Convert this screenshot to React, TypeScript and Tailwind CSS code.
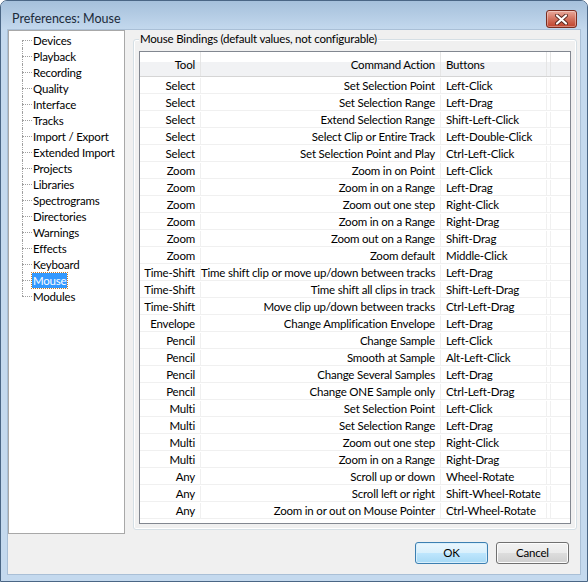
import React from 'react';

const rows: [string, string, string][] = [
  ['Select', 'Set Selection Point', 'Left-Click'],
  ['Select', 'Set Selection Range', 'Left-Drag'],
  ['Select', 'Extend Selection Range', 'Shift-Left-Click'],
  ['Select', 'Select Clip or Entire Track', 'Left-Double-Click'],
  ['Select', 'Set Selection Point and Play', 'Ctrl-Left-Click'],
  ['Zoom', 'Zoom in on Point', 'Left-Click'],
  ['Zoom', 'Zoom in on a Range', 'Left-Drag'],
  ['Zoom', 'Zoom out one step', 'Right-Click'],
  ['Zoom', 'Zoom in on a Range', 'Right-Drag'],
  ['Zoom', 'Zoom out on a Range', 'Shift-Drag'],
  ['Zoom', 'Zoom default', 'Middle-Click'],
  ['Time-Shift', 'Time shift clip or move up/down between tracks', 'Left-Drag'],
  ['Time-Shift', 'Time shift all clips in track', 'Shift-Left-Drag'],
  ['Time-Shift', 'Move clip up/down between tracks', 'Ctrl-Left-Drag'],
  ['Envelope', 'Change Amplification Envelope', 'Left-Drag'],
  ['Pencil', 'Change Sample', 'Left-Click'],
  ['Pencil', 'Smooth at Sample', 'Alt-Left-Click'],
  ['Pencil', 'Change Several Samples', 'Left-Drag'],
  ['Pencil', 'Change ONE Sample only', 'Ctrl-Left-Drag'],
  ['Multi', 'Set Selection Point', 'Left-Click'],
  ['Multi', 'Set Selection Range', 'Left-Drag'],
  ['Multi', 'Zoom out one step', 'Right-Click'],
  ['Multi', 'Zoom in on a Range', 'Right-Drag'],
  ['Any', 'Scroll up or down', 'Wheel-Rotate'],
  ['Any', 'Scroll left or right', 'Shift-Wheel-Rotate'],
  ['Any', 'Zoom in or out on Mouse Pointer', 'Ctrl-Wheel-Rotate'],
];

const pages = [
  'Devices',
  'Playback',
  'Recording',
  'Quality',
  'Interface',
  'Tracks',
  'Import / Export',
  'Extended Import',
  'Projects',
  'Libraries',
  'Spectrograms',
  'Directories',
  'Warnings',
  'Effects',
  'Keyboard',
  'Mouse',
  'Modules',
];

function CloseButton() {
  return (
    <button className="mt-[1px] w-[31px] h-[18px] rounded-[3px] border border-[#7a2c1f] bg-gradient-to-b from-[#e9a99b] via-[#d2715d] to-[#c0412b] flex items-center justify-center shadow-[inset_0_0_0_1px_rgba(255,255,255,0.35)]">
      <svg width="13" height="11" viewBox="0 0 13 11">
        <path d="M2 1.5 L11 9.5 M11 1.5 L2 9.5" stroke="#5a2a22" strokeWidth="4" strokeLinecap="round" />
        <path d="M2 1.5 L11 9.5 M11 1.5 L2 9.5" stroke="#ffffff" strokeWidth="2.2" strokeLinecap="round" />
      </svg>
    </button>
  );
}

export default function App() {
  return (
    <div className="w-[588px] h-[582px] bg-white">
      <div className="w-[588px] h-[582px] flex flex-col rounded-t-[7px] border border-[#4a6685] bg-[#c4d9ee] font-['Lato',sans-serif] text-[11.5px] tracking-[-0.2px] text-black overflow-hidden">
        {/* Title bar */}
        <div className="h-[29px] shrink-0 flex items-start justify-between pl-[11px] pr-[10px] pt-[8px] bg-gradient-to-b from-[#a5c0db] to-[#c4d9ee]">
          <span className="text-[12.5px] tracking-[0px] leading-[20px] text-[#1b2a3a]">Preferences: Mouse</span>
          <CloseButton />
        </div>

        <div className="flex-1 flex px-[7px] pb-[7px]">
          <div className="flex-1 flex flex-col bg-[#f0f0f0] shadow-[0_0_0_1px_#a9bfd6]">
            <div className="flex">
              {/* Page tree */}
              <div className="w-[117px] h-[504px] shrink-0 border border-[#a8a8a8] bg-white pt-[1px] pl-[13px]">
                {pages.map((p, i) => (
                  <div key={p} className="h-[16px] flex items-center">
                    <div className="w-[10px] h-[16px] shrink-0 flex flex-col">
                      <div className={`h-[8px] ${i === 0 ? '' : 'border-l border-dotted border-[#a0a0a0]'}`} />
                      <div
                        className={`h-[8px] border-t border-dotted border-[#a0a0a0] ${i === pages.length - 1 ? '' : 'border-l'}`}
                      />
                    </div>
                    <span
                      className={`px-[1px] leading-[15px] whitespace-nowrap ${p === 'Mouse' ? 'bg-[#3399ff] text-white outline outline-1 outline-dotted outline-[#c07a2b]' : ''}`}
                    >
                      {p}
                    </span>
                  </div>
                ))}
              </div>

              {/* Group box */}
              <div className="relative ml-[8px] mt-[9px] w-[444px] h-[491px] border border-[#d5dfe5] rounded-[3px] pt-[11px] pl-[5px] shadow-[inset_0_0_0_1px_#ffffff]">
                <span className="absolute left-[5px] top-[-9px] px-[1px] leading-[16px] bg-[#f0f0f0] whitespace-nowrap">
                  Mouse Bindings (default values, not configurable)
                </span>

                <div className="w-[432px] h-[473px] border border-[#828790] bg-white flex flex-col">
                  {/* Header */}
                  <div className="h-[25px] shrink-0 flex border-b border-[#d5d5d5] bg-[linear-gradient(to_bottom,#ffffff_0%,#ffffff_42%,#f1f2f4_43%,#f1f2f4_100%)]">
                    <div className="w-[61px] shrink-0 border-r border-[#e5e5e5] text-right pr-[5px] pt-[1px] leading-[24px]">Tool</div>
                    <div className="w-[240px] shrink-0 border-r border-[#e5e5e5] text-right pr-[5px] pt-[1px] leading-[24px]">
                      Command Action
                    </div>
                    <div className="w-[106px] shrink-0 border-r border-[#e5e5e5] pl-[5px] pt-[1px] leading-[24px]">Buttons</div>
                    <div className="w-[4px] shrink-0 border-r border-[#e5e5e5]" />
                    <div className="flex-1" />
                  </div>

                  {/* Rows */}
                  {rows.map(([tool, action, buttons], i) => (
                    <div key={i} className="h-[17px] shrink-0 flex border-b border-[#f0f0f0] pt-[1px] leading-[16px] whitespace-nowrap">
                      <div className="w-[61px] shrink-0 border-r border-[#f0f0f0] text-right pr-[5px]">{tool}</div>
                      <div className="w-[240px] shrink-0 border-r border-[#f0f0f0] text-right pr-[5px]">{action}</div>
                      <div className="w-[106px] shrink-0 border-r border-[#f0f0f0] pl-[5px]">{buttons}</div>
                      <div className="w-[4px] shrink-0 border-r border-[#f0f0f0]" />
                      <div className="flex-1" />
                    </div>
                  ))}
                </div>
              </div>
            </div>

            {/* Dialog buttons */}
            <div className="flex justify-end gap-[8px] mt-[8px] pr-[11px]">
              <button className="w-[73px] h-[22px] rounded-[3px] border border-[#3c7fb1] bg-[linear-gradient(to_bottom,#eaf6fd_0%,#d9f0fc_50%,#bee6fd_51%,#a7d9f5_100%)] shadow-[inset_0_0_0_1px_#d8effc]">
                OK
              </button>
              <button className="w-[73px] h-[22px] rounded-[3px] border border-[#707070] bg-[linear-gradient(to_bottom,#f2f2f2_0%,#ebebeb_50%,#dddddd_51%,#cfcfcf_100%)] shadow-[inset_0_0_0_1px_#fcfcfc]">
                Cancel
              </button>
            </div>
          </div>
        </div>
      </div>
    </div>
  );
}
